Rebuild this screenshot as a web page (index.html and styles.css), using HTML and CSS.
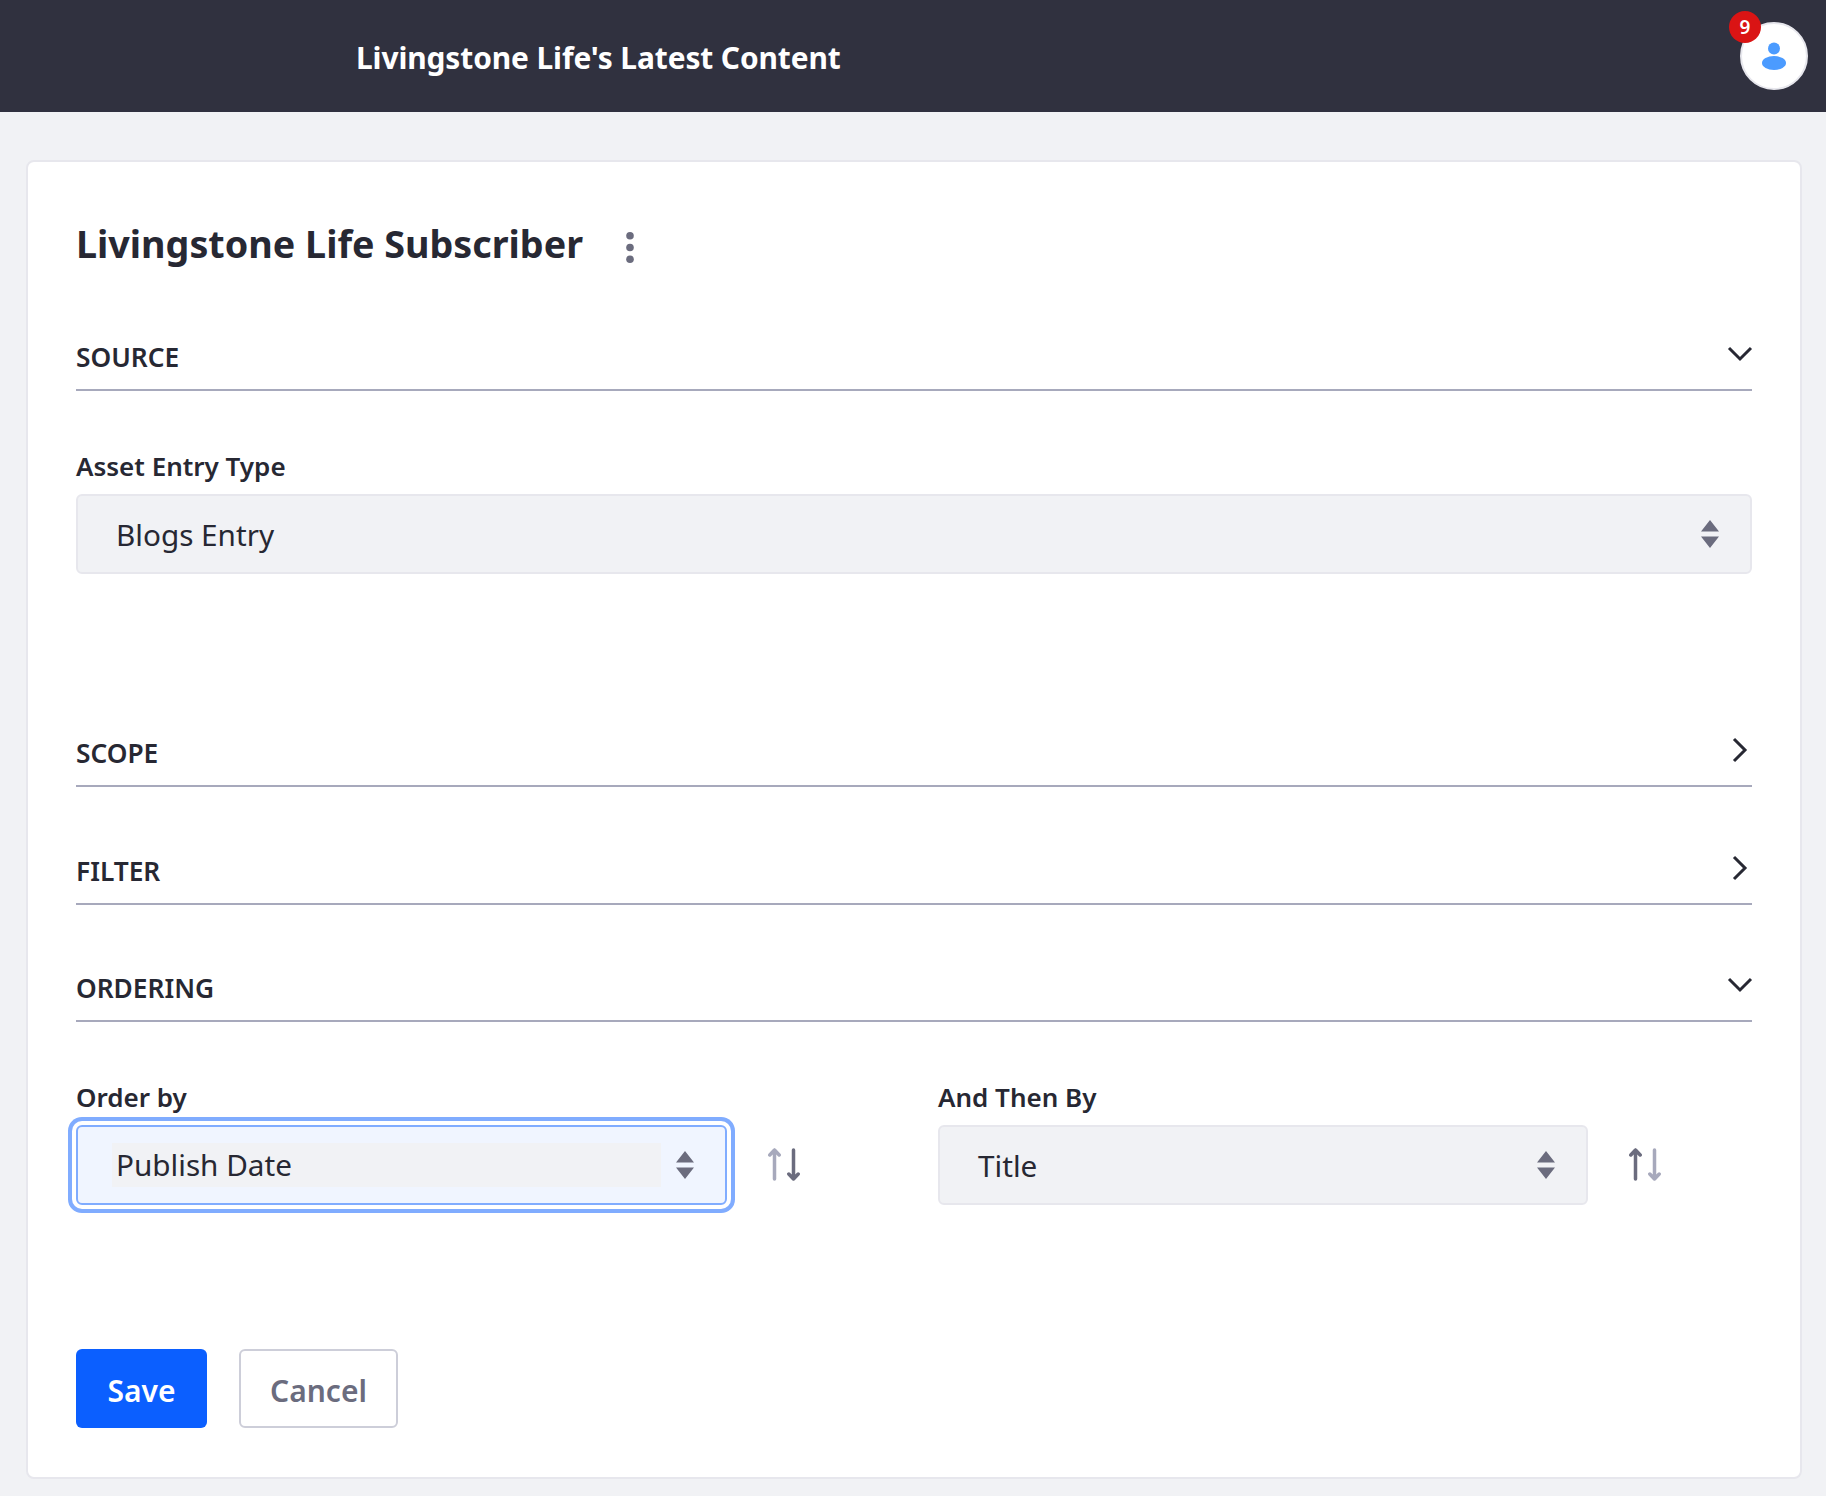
FILE: index.html
```html
<!DOCTYPE html>
<html>
<head>
    <title>Livingstone Life's Latest Content</title>
    <link rel="stylesheet" href="styles.css">
</head>
<body>
    <header class="topbar">
        <div class="topbar-title">Livingstone Life's Latest Content</div>
        <div class="avatar">
            <span class="badge">9</span>
            <svg width="26" height="28" viewBox="0 0 26 28"><circle cx="13" cy="6.5" r="6" fill="#4b9bff"/><ellipse cx="13" cy="21" rx="12" ry="7" fill="#4b9bff"/></svg>
        </div>
    </header>
    <main class="page">
        <div class="card">
            <div class="card-head">
                <h1>Livingstone Life Subscriber</h1>
                <svg class="dots" width="8" height="31" viewBox="0 0 8 31"><circle cx="4" cy="3.8" r="3.8"/><circle cx="4" cy="15.5" r="3.8"/><circle cx="4" cy="27.2" r="3.8"/></svg>
            </div>

            <section class="section open">
                <div class="section-head">
                    <span>SOURCE</span>
                    <svg class="chevron-down" width="26" height="16" viewBox="0 0 26 16"><path d="M2 2l11 11L24 2"/></svg>
                </div>
                <div class="section-body">
                    <label>Asset Entry Type</label>
                    <div class="select">
                        <span class="select-text">Blogs Entry</span>
                        <svg class="updown" width="18" height="28" viewBox="0 0 18 28"><path d="M9 0l9 11.5H0zM0 16.5h18L9 28z"/></svg>
                    </div>
                </div>
            </section>

            <section class="section">
                <div class="section-head">
                    <span>SCOPE</span>
                    <svg class="chevron-right" width="16" height="26" viewBox="0 0 16 26"><path d="M2 2l11 11L2 24"/></svg>
                </div>
            </section>

            <section class="section">
                <div class="section-head">
                    <span>FILTER</span>
                    <svg class="chevron-right" width="16" height="26" viewBox="0 0 16 26"><path d="M2 2l11 11L2 24"/></svg>
                </div>
            </section>

            <section class="section">
                <div class="section-head">
                    <span>ORDERING</span>
                    <svg class="chevron-down" width="26" height="16" viewBox="0 0 26 16"><path d="M2 2l11 11L24 2"/></svg>
                </div>
                <div class="order-row">
                    <div class="order-col">
                        <label>Order by</label>
                        <div class="order-control">
                            <div class="select focused">
                                <span class="select-text">Publish Date</span>
                                <svg class="updown" width="18" height="28" viewBox="0 0 18 28"><path d="M9 0l9 11.5H0zM0 16.5h18L9 28z"/></svg>
                            </div>
                            <svg class="sort" width="32" height="33" viewBox="0 0 32 33"><path class="dim" d="M6.5 31V2M1.8 7l4.700-5 4.700 5"/><path d="M25.500 2v29M20.800 26l4.700 5 4.700-5"/></svg>
                        </div>
                    </div>
                    <div class="order-col">
                        <label>And Then By</label>
                        <div class="order-control">
                            <div class="select">
                                <span class="select-text">Title</span>
                                <svg class="updown" width="18" height="28" viewBox="0 0 18 28"><path d="M9 0l9 11.5H0zM0 16.5h18L9 28z"/></svg>
                            </div>
                            <svg class="sort" width="32" height="33" viewBox="0 0 32 33"><path d="M6.5 31V2M1.8 7l4.700-5 4.700 5"/><path class="dim" d="M25.500 2v29M20.800 26l4.700 5 4.700-5"/></svg>
                        </div>
                    </div>
                </div>
            </section>

            <div class="actions">
                <button class="btn btn-primary">Save</button>
                <button class="btn btn-secondary">Cancel</button>
            </div>
        </div>
    </main>
</body>
</html>
```

FILE: styles.css
```css
* {
    box-sizing: border-box;
}
body {
    margin: 0;
    background-color: #f1f2f5;
    color: #272833;
    font-family: 'Noto Sans', 'Open Sans', Arial, sans-serif;
}
.topbar {
    height: 112px;
    background-color: #30313f;
    display: flex;
    align-items: center;
    justify-content: space-between;
    padding: 0 18px 0 356px;
}
.topbar-title {
    color: #fff;
    font-size: 29.9px;
    font-weight: 700;
    padding-top: 2px;
    letter-spacing: -0.1px;
}
.avatar {
    width: 68px;
    height: 68px;
    margin-top: -1px;
    border-radius: 50%;
    background-color: #fff;
    border: 2px solid #e7e7ed;
    position: relative;
    display: flex;
    align-items: center;
    justify-content: center;
}
.badge {
    position: absolute;
    left: -13px;
    top: -13px;
    width: 32px;
    height: 32px;
    border-radius: 50%;
    background-color: #da1414;
    color: #fff;
    font-size: 19px;
    font-weight: 600;
    line-height: 32px;
    text-align: center;
}
.page {
    padding: 48px 24px 17px 26px;
}
.card {
    background-color: #fff;
    border: 2px solid #e7e7ed;
    border-radius: 8px;
    padding: 57px 48px 49px 48px;
}
.card-head {
    display: flex;
    align-items: center;
    gap: 43px;
    height: 48px;
}
h1 {
    margin: 0;
    font-size: 37.7px;
    font-weight: 700;
    line-height: 48px;
    padding-top: 1px;
}
.dots {
    fill: #6b6c7e;
    margin-top: 8px;
}
.section {
    margin-top: 56.5px;
}
.card-head + .section {
    margin-top: 63px;
}
.section-head {
    height: 61px;
    border-bottom: 2px solid #a7a9bc;
    display: flex;
    justify-content: space-between;
    align-items: flex-start;
    font-size: 26.3px;
    font-weight: 600;
    line-height: 36px;
    padding-top: 9px;
}
.section-head svg {
    fill: none;
    stroke: #272833;
    stroke-width: 3;
}
.chevron-down {
    margin-right: -1px;
    margin-top: 7px;
}
.chevron-right {
    margin-right: 4px;
    margin-top: 2px;
}
.section-body {
    margin-top: 61px;
    padding-bottom: 95.5px;
}
label {
    display: block;
    font-size: 26px;
    font-weight: 600;
    line-height: 30px;
    margin-bottom: 12px;
    margin-top: -1px;
    padding-bottom: 1px;
}
.select {
    height: 80px;
    background-color: #f1f2f5;
    border: 2px solid #e7e7ed;
    border-radius: 6px;
    display: flex;
    align-items: center;
    justify-content: space-between;
    padding: 0 31px 0 38px;
    font-size: 29.7px;
    flex: 1;
}
.select-text {
    flex: 1;
    padding-top: 1px;
}
.select.focused {
    background-color: #f0f5ff;
    border-color: #80acff;
    box-shadow: 0 0 0 4px #fff, 0 0 0 8px #80acff;
    padding-left: 34px;
}
.select.focused .select-text {
    background-color: #f1f2f5;
    padding: 0 0 0 4px;
    line-height: 44px;
    margin-right: 15px;
    position: relative;
}
.updown {
    fill: #6b6c7e;
}
.order-row {
    display: grid;
    grid-template-columns: 862px 1fr;
    margin-top: 61px;
}
.order-col {
    min-width: 0;
}
.order-control {
    display: flex;
    align-items: center;
    gap: 41px;
}
.order-col .select {
    flex: 0 0 651px;
}
.order-col + .order-col .select {
    flex-basis: 650px;
}
.sort {
    fill: none;
    stroke: #6b6c7e;
    stroke-width: 3.5;
    stroke-linecap: round;
    stroke-linejoin: round;
    margin-top: -2px;
}
.sort .dim {
    stroke: #a7a9bc;
}
.actions {
    display: flex;
    gap: 32px;
    margin-top: 144px;
}
.btn {
    height: 79px;
    border-radius: 6px;
    font-family: inherit;
    font-size: 30px;
    font-weight: 600;
    padding: 3px 0 0;
}
.btn-primary {
    width: 131px;
    background-color: #0b5fff;
    border: none;
    color: #fff;
}
.btn-secondary {
    width: 159px;
    background-color: #fff;
    border: 2px solid #cdced9;
    color: #6b6c7e;
}
```
